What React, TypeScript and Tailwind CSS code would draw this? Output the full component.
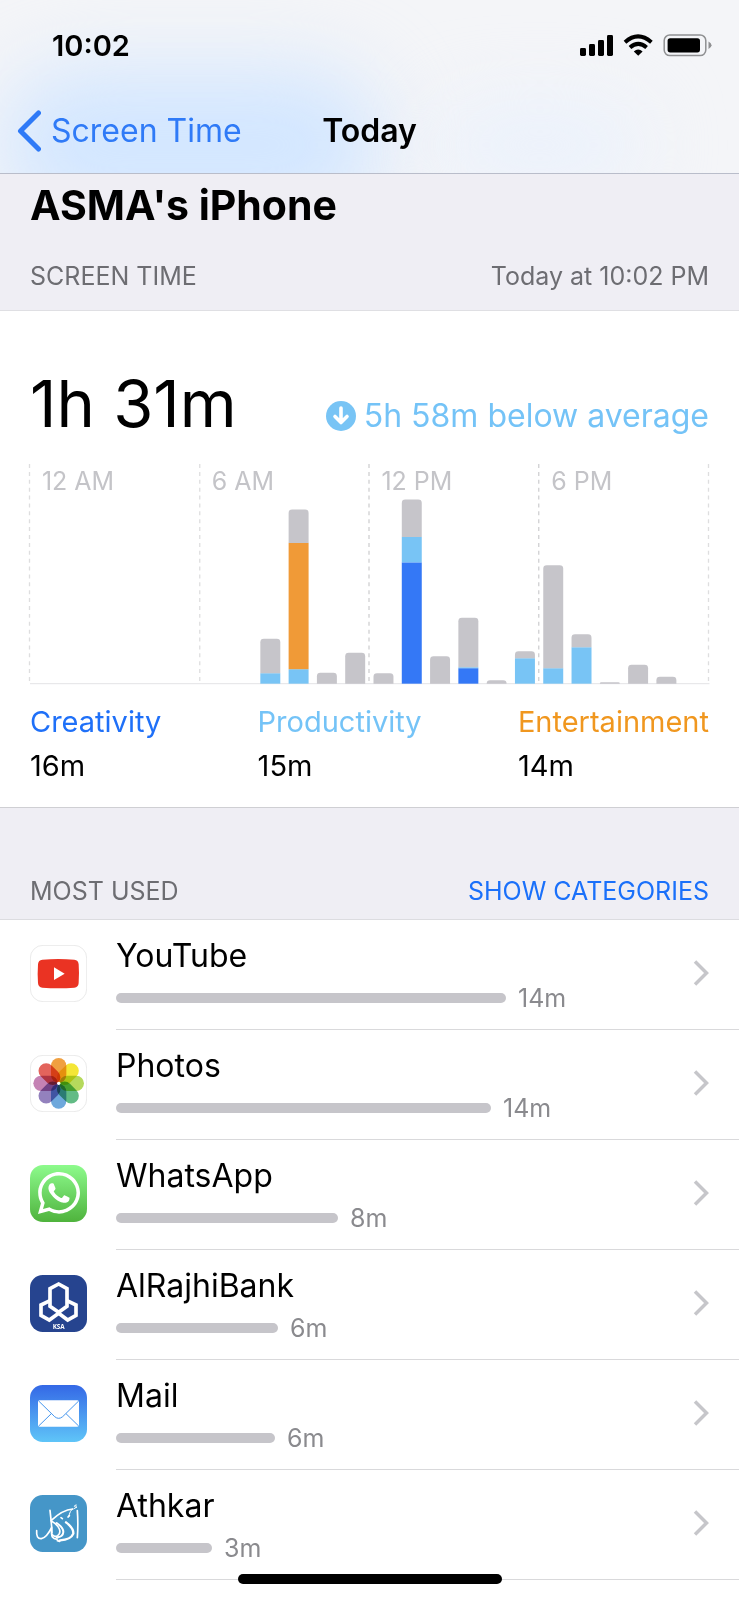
import type { ReactNode } from "react";
import { FaWhatsapp } from "react-icons/fa";

const GREY = "#c6c5ca";
const SKY = "#78c4f5";
const BLUE = "#3478f6";
const ORANGE = "#f09a37";

type Segment = [color: string, height: number];

const hours: { hour: number; segments: Segment[] }[] = [
  { hour: 8, segments: [[SKY, 10.5], [GREY, 34.5]] },
  { hour: 9, segments: [[SKY, 14.5], [ORANGE, 126.5], [GREY, 33.5]] },
  { hour: 10, segments: [[GREY, 11]] },
  { hour: 11, segments: [[GREY, 31]] },
  { hour: 12, segments: [[GREY, 10.5]] },
  { hour: 13, segments: [[BLUE, 121.5], [SKY, 25.5], [GREY, 37.5]] },
  { hour: 14, segments: [[GREY, 27.5]] },
  { hour: 15, segments: [[BLUE, 15.5], [SKY, 1], [GREY, 49.5]] },
  { hour: 16, segments: [[GREY, 3.5]] },
  { hour: 17, segments: [[SKY, 25.5], [GREY, 7]] },
  { hour: 18, segments: [[SKY, 15.5], [GREY, 103]] },
  { hour: 19, segments: [[SKY, 36.5], [GREY, 13]] },
  { hour: 20, segments: [[GREY, 1.5]] },
  { hour: 21, segments: [[GREY, 19]] },
  { hour: 22, segments: [[GREY, 7]] },
];

const BASE = 220;

function HourBar({ hour, segments }: { hour: number; segments: Segment[] }) {
  const x = 4 + (hour * 680) / 24;
  const total = segments.reduce((sum, s) => sum + s[1], 0);
  const r = Math.min(3.5, total);
  const top = BASE - total;
  let y = BASE;
  return (
    <g>
      {segments.map(([color, height], i) => {
        y -= height;
        return i === segments.length - 1 ? (
          <path
            key={i}
            fill={color}
            d={`M${x} ${y + height}V${top + r}q0 ${-r} ${r} ${-r}h${20 - 2 * r}q${r} 0 ${r} ${r}V${y + height}z`}
          />
        ) : (
          <rect key={i} x={x} y={y} width={20} height={height} fill={color} />
        );
      })}
    </g>
  );
}

function UsageChart() {
  return (
    <svg viewBox="0 0 680 222" className="mt-[27px] block w-full overflow-visible" role="img" aria-label="Usage by hour">
      {[-0.5, 170, 339.5, 509.5, 679.5].map((x, i) => (
        <line key={x} x1={x} x2={x} y1="0" y2="218" stroke={i === 2 || i === 3 ? "#d0d0d2" : "#dededf"} strokeWidth="1.3" strokeDasharray="4 3.9" />
      ))}
      {["12 AM", "6 AM", "12 PM", "6 PM"].map((label, i) => (
        <text key={label} x={12 + i * 170} y="26" fontSize="25" fill="#c4c4c8">
          {label}
        </text>
      ))}
      <line x1="0" x2="680.5" y1="220" y2="220" stroke="#e4e4e6" strokeWidth="1" />
      {hours.map((h) => (
        <HourBar key={h.hour} {...h} />
      ))}
    </svg>
  );
}

function YouTubeIcon() {
  return (
    <svg viewBox="0 0 171 171" className="size-full">
      <rect x="1" y="1" width="169" height="169" rx="38" fill="#fff" stroke="#e6e6e6" strokeWidth="2.5" />
      <path d="M37 44q48-4 96 0 12 1 13 14 2 27 0 56-1 13-13 14-48 4-96 0-12-1-13-14-2-28 0-56 1-13 13-14z" fill="#ea3323" />
      <path d="M72 67v38l32-19z" fill="#fff" />
    </svg>
  );
}

function PhotosIcon() {
  const petals = ["#f0a040", "#f4e636", "#b5d95c", "#62bb85", "#6ea8dc", "#9381bd", "#c583b4", "#e3645c"];
  return (
    <svg viewBox="0 0 171 171" className="size-full">
      <rect x="1" y="1" width="169" height="169" rx="38" fill="#fff" stroke="#e6e6e6" strokeWidth="2.5" />
      <g style={{ isolation: "isolate" }}>
        {petals.map((color, i) => (
          <rect
            key={color}
            x="63"
            y="9"
            width="46"
            height="74"
            rx="23"
            fill={color}
            transform={`rotate(${i * 45} 86 85)`}
            className="mix-blend-multiply"
          />
        ))}
      </g>
      <circle cx="86" cy="85" r="5" fill="#fff" />
    </svg>
  );
}

function WhatsAppIcon() {
  return (
    <span className="flex size-full items-center justify-center rounded-[13px] bg-linear-to-b from-[#8dfb8c] to-[#4fb33c]">
      <FaWhatsapp className="size-[48px] text-white" />
    </span>
  );
}

function BankIcon() {
  return (
    <svg viewBox="0 0 171 171" className="size-full">
      <rect width="171" height="171" rx="38" fill="#26448f" />
      <g fill="none" stroke="#fff" strokeWidth="11">
        <path d="M86 27l25 14v53L86 112 60 94V41z" />
        <path d="M60 77L33 90v31l25 14 28-20" />
        <path d="M111 77l27 13v31l-25 14-27-20" />
      </g>
      <text x="86" y="161" textAnchor="middle" fontSize="19" fontWeight="700" fill="#fff" fontFamily="Open Sans, sans-serif">
        KSA
      </text>
    </svg>
  );
}

function MailIcon() {
  return (
    <svg viewBox="0 0 171 171" className="size-full">
      <defs>
        <linearGradient id="mail" x1="0" y1="0" x2="0" y2="1">
          <stop offset="0" stopColor="#3468e6" />
          <stop offset="1" stopColor="#5fc5f8" />
        </linearGradient>
      </defs>
      <rect width="171" height="171" rx="38" fill="url(#mail)" />
      <rect x="24" y="46" width="123" height="79" rx="5" fill="#fff" />
      <g fill="none" stroke="#4596ee" strokeWidth="3">
        <path d="M26 48l48 47q12 10 24 0l48-47" />
        <path d="M26 123l38-37M146 123l-38-37" />
      </g>
    </svg>
  );
}

function AthkarIcon() {
  return (
    <svg viewBox="0 0 171 171" className="size-full">
      <rect width="171" height="171" rx="38" fill="#4596c8" />
      <g fill="none" stroke="#fff" strokeLinecap="round" strokeLinejoin="round">
        <path d="M142 47q3 40 0 81" strokeWidth="5" />
        <path d="M139 30q-6 0-6 4 3 3 8 2l-9 5" strokeWidth="3" />
        <path d="M128 42q-30 2-65 35 18 10 25 25 5 13-5 20-9 6-16-3" strokeWidth="5" />
        <path d="M60 46q5 42 6 68" strokeWidth="5" />
        <path d="M128 42q-8 3-12 24" strokeWidth="3" />
        <path d="M20 107q-2 25 14 24 16-3 31-34-2 20 2 29 6 8 16 6" strokeWidth="5" />
        <path d="M80 84q20 13 20 27-1 15-20 16" strokeWidth="6" />
        <path d="M108 82q23 17 22 34-7 18-40 20" strokeWidth="7" />
        <path d="M93 68l4 3M82 137l7 2M118 62l-4 4" strokeWidth="5" />
      </g>
    </svg>
  );
}

const apps: { name: string; time: string; width: number; icon: ReactNode }[] = [
  { name: "YouTube", time: "14m", width: 390, icon: <YouTubeIcon /> },
  { name: "Photos", time: "14m", width: 375, icon: <PhotosIcon /> },
  { name: "WhatsApp", time: "8m", width: 222, icon: <WhatsAppIcon /> },
  { name: "AlRajhiBank", time: "6m", width: 162, icon: <BankIcon /> },
  { name: "Mail", time: "6m", width: 159, icon: <MailIcon /> },
  { name: "Athkar", time: "3m", width: 96, icon: <AthkarIcon /> },
];

const legend = [
  { name: "Creativity", time: "16m", className: "text-[#1f70f8]" },
  { name: "Productivity", time: "15m", className: "text-[#74c3f7]" },
  { name: "Entertainment", time: "14m", className: "text-[#f0971f]" },
];

function StatusIcons() {
  return (
    <svg viewBox="0 0 134 24" className="h-6 w-[134px]" aria-hidden="true">
      <rect x="1" y="14" width="6" height="8" rx="1.4" />
      <rect x="10" y="10" width="6" height="12" rx="1.4" />
      <rect x="19" y="6" width="6" height="16" rx="1.4" />
      <rect x="28" y="1" width="6" height="21" rx="1.4" />
      <g fill="none" stroke="#000" strokeWidth="4">
        <path d="M46 8.200q13-11.500 26.400 0" />
        <path d="M51 13.400q8.200-7.200 16.600 0" />
      </g>
      <path d="M54.800 17.400q4.400-3.600 8.800 0l-4.400 4.400z" />
      <rect x="85.200" y="1" width="41.600" height="20.600" rx="5.600" fill="none" stroke="#8f9092" strokeWidth="1.500" />
      <rect x="88.600" y="4.200" width="32.400" height="14.200" rx="2.600" />
      <path d="M129.500 7.500q3 1.500 3 3.800t-3 3.800z" fill="#8f9092" />
    </svg>
  );
}

export default function App() {
  return (
    <div className="relative min-h-screen overflow-hidden bg-white font-['Inter','Liberation_Sans',sans-serif] text-black">
      <header className="relative overflow-hidden border-b border-[#b9bdca] bg-[#f4f5f8]">
        <div className="absolute top-[70px] left-0 h-[150px] w-[380px] rounded-full bg-[#d2e6ff] blur-2xl" />
        <div className="absolute top-[110px] left-[440px] h-[70px] w-[200px] rounded-full bg-[#e9f1fd] blur-2xl" />
        <div className="relative flex h-[92px] items-center justify-between pr-[26px] pl-[52px]">
          <time className="text-[29px] leading-9 font-semibold">10:02</time>
          <StatusIcons />
        </div>
        <nav className="relative grid h-[81px] grid-cols-[1fr_auto_1fr] items-center pb-[3px]">
          <a href="#screen-time" className="flex items-center gap-[10px] pl-[17px] text-[32px] leading-10 text-[#2f7af7]">
            <svg viewBox="0 0 24 42" className="h-[42px] w-6" fill="none" stroke="currentColor" strokeWidth="5" strokeLinecap="round" strokeLinejoin="round" aria-hidden="true">
              <path d="M21.500 3L3.500 21l18 18" />
            </svg>
            Screen Time
          </a>
          <h1 className="text-[32px] leading-10 font-semibold">Today</h1>
        </nav>
      </header>

      <main>
        <div className="border-b border-[#dfdfe3] bg-[#efeef4] px-[30px] pt-[6px] pb-[18px]">
          <h2 className="text-[41px] leading-[50px] font-bold">ASMA's iPhone</h2>
          <div className="mt-[30px] flex items-center justify-between text-[25px] leading-8 text-[#6d6d72]">
            <h3>SCREEN TIME</h3>
            <p>Today at 10:02 PM</p>
          </div>
        </div>

        <section className="border-b border-[#cfcfd3] px-[30px] pt-[60px] pb-[19px]">
          <div className="flex items-end justify-between">
            <p className="text-[65px] leading-[66px]">1h 31m</p>
            <p className="flex items-center gap-2 text-[32px] leading-[42px] text-[#74c3f7]">
              <svg viewBox="0 0 30 30" className="size-[30px]" aria-hidden="true">
                <circle cx="15" cy="15" r="15" fill={SKY} />
                <path d="M15 7v14M9 15.500l6 6 6-6" fill="none" stroke="#fff" strokeWidth="3.600" strokeLinecap="round" strokeLinejoin="round" />
              </svg>
              5h 58m below average
            </p>
          </div>
          <UsageChart />
          <dl className="mt-[14px] flex justify-between text-[29px] leading-[44px]">
            {legend.map((item) => (
              <div key={item.name}>
                <dt className={item.className}>{item.name}</dt>
                <dd>{item.time}</dd>
              </div>
            ))}
          </dl>
        </section>

        <div className="flex items-center justify-between border-b border-[#dcdce0] bg-[#efeef4] px-[30px] pt-[67px] pb-[12px] text-[25px] leading-8 text-[#6d6d72]">
          <h3>MOST USED</h3>
          <button type="button" className="text-[#1a70fa]">SHOW CATEGORIES</button>
        </div>

        <ul>
          {apps.map((app) => (
            <li key={app.name}>
              <a href={`#${app.name}`} className="flex h-[110px] pl-[30px]">
                <span className="mt-[25px] mr-[29px] block size-[57px] shrink-0">{app.icon}</span>
                <span className="flex grow items-start justify-between border-b border-[#d9d9db] pr-[30px]">
                  <span className="pt-4">
                    <span className="block text-[32px] leading-10">{app.name}</span>
                    <span className="mt-[6px] flex items-center gap-3">
                      <span className="h-[10px] rounded-full bg-[#c6c5ca]" style={{ width: app.width }} />
                      <span className="text-[25px] leading-8 text-[#8a8a8e]">{app.time}</span>
                    </span>
                  </span>
                  <svg viewBox="0 0 16 26" className="mt-10 h-[26px] w-4" fill="none" stroke="#c6c6ca" strokeWidth="3.500" aria-hidden="true">
                    <path d="M2 1.500L13.500 13 2 24.500" />
                  </svg>
                </span>
              </a>
            </li>
          ))}
        </ul>
      </main>

      <div className="fixed bottom-4 left-1/2 h-[10px] w-[264px] -translate-x-1/2 rounded-full bg-black" />
    </div>
  );
}
